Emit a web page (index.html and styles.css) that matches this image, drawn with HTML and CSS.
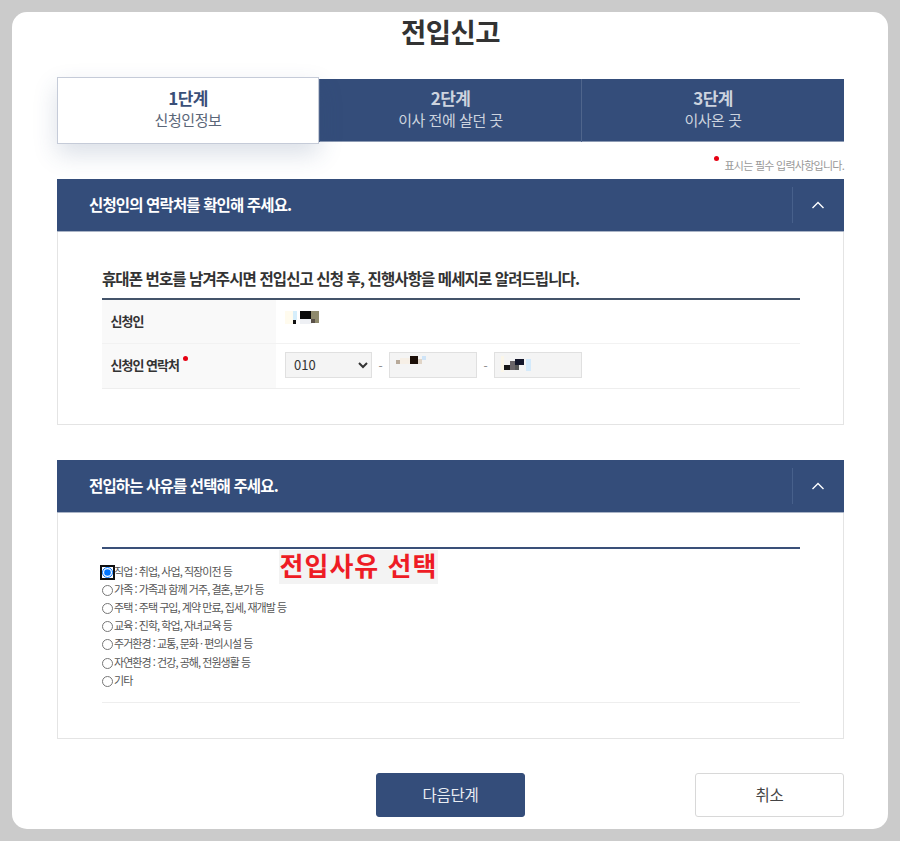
FILE: index.html
```html
<!DOCTYPE html>
<html lang="ko">
<head>
<meta charset="utf-8">
<title>전입신고</title>
<link rel="stylesheet" href="styles.css">
</head>
<body>
<main class="card">
  <h1 class="title">전입신고</h1>
  <ol class="steps">
    <li class="step active"><strong>1단계</strong><span>신청인정보</span></li>
    <li class="step"><strong>2단계</strong><span>이사 전에 살던 곳</span></li>
    <li class="step"><strong>3단계</strong><span>이사온 곳</span></li>
  </ol>
  <p class="required-note"><i class="dot"></i>표시는 필수 입력사항입니다.</p>

  <section class="panel">
    <header class="panel-head">
      <h2>신청인의 연락처를 확인해 주세요.</h2>
      <button class="toggle" type="button" aria-label="접기">
        <svg width="14" height="8" viewBox="0 0 14 8"><path d="M1.5 7 7 1.5 12.500 7" fill="none" stroke="#fff" stroke-width="1.400"/></svg>
      </button>
    </header>
    <div class="panel-body contact-body">
      <h3 class="lead">휴대폰 번호를 남겨주시면 전입신고 신청 후, 진행사항을 메세지로 알려드립니다.</h3>
      <div class="form-table">
        <div class="row name-row">
          <div class="label">신청인</div>
          <div class="value">
            <svg class="blur-name" width="34" height="14" viewBox="0 0 34 14" shape-rendering="crispEdges">
              <rect x="0" y="0" width="8" height="13" fill="#fffbee"/>
              <rect x="8" y="0" width="4" height="9" fill="#d6eefb"/>
              <rect x="8" y="9" width="3" height="4" fill="#111"/>
              <rect x="15" y="0" width="12" height="8" fill="#0a0a0a"/>
              <rect x="15" y="8" width="12" height="5" fill="#eef0f4"/>
              <rect x="26" y="0" width="8" height="12" fill="#8f8a6c"/>
              <rect x="26" y="8" width="4" height="4" fill="#5a5148"/>
            </svg>
          </div>
        </div>
        <div class="row phone-row">
          <div class="label">신청인 연락처<i class="dot label-dot"></i></div>
          <div class="value phone">
            <select class="field select"><option>010</option></select>
            <span class="dash">-</span>
            <div class="field text-field">
              <svg width="34" height="10" viewBox="0 0 34 10" shape-rendering="crispEdges">
                <rect x="0" y="4" width="4" height="4" fill="#b8aa9a"/>
                <rect x="4" y="2" width="10" height="6" fill="#f6efe6"/>
                <rect x="14" y="0" width="8" height="8" fill="#1c0f08"/>
                <rect x="22" y="3" width="4" height="5" fill="#e0d4c6"/>
                <rect x="26" y="0" width="4" height="4" fill="#cfe4f7"/>
              </svg>
            </div>
            <span class="dash">-</span>
            <div class="field text-field">
              <svg width="30" height="16" viewBox="0 0 30 16" shape-rendering="crispEdges">
                <rect x="0" y="0" width="3" height="16" fill="#fbf6e8"/>
                <rect x="3" y="9" width="6" height="5" fill="#181818"/>
                <rect x="9" y="5" width="5" height="9" fill="#6a6468"/>
                <rect x="14" y="3" width="9" height="6" fill="#14162a"/>
                <rect x="14" y="9" width="4" height="5" fill="#555"/>
                <rect x="25" y="3" width="5" height="12" fill="#d4eafb"/>
              </svg>
            </div>
          </div>
        </div>
      </div>
    </div>
  </section>

  <section class="panel second">
    <header class="panel-head">
      <h2>전입하는 사유를 선택해 주세요.</h2>
      <button class="toggle" type="button" aria-label="접기">
        <svg width="14" height="8" viewBox="0 0 14 8"><path d="M1.5 7 7 1.5 12.500 7" fill="none" stroke="#fff" stroke-width="1.400"/></svg>
      </button>
    </header>
    <div class="panel-body reason-body">
      <div class="reasons">
        <span class="callout">전입사유 선택</span>
        <label class="reason"><input type="radio" name="reason" class="focused" checked><span>직업 : 취업, 사업, 직장이전 등</span></label>
        <label class="reason"><input type="radio" name="reason"><span>가족 : 가족과 함께 거주, 결혼, 분가 등</span></label>
        <label class="reason"><input type="radio" name="reason"><span>주택 : 주택 구입, 계약 만료, 집세, 재개발 등</span></label>
        <label class="reason"><input type="radio" name="reason"><span>교육 : 진학, 학업, 자녀교육 등</span></label>
        <label class="reason"><input type="radio" name="reason"><span>주거환경 : 교통, 문화 · 편의시설 등</span></label>
        <label class="reason"><input type="radio" name="reason"><span>자연환경 : 건강, 공해, 전원생활 등</span></label>
        <label class="reason"><input type="radio" name="reason"><span>기타</span></label>
      </div>
    </div>
  </section>

  <div class="actions">
    <button class="btn primary" type="button">다음단계</button>
    <button class="btn secondary" type="button">취소</button>
  </div>
</main>
</body>
</html>
```
FILE: styles.css
```css
* { box-sizing: border-box; }
html, body { margin: 0; height: 100%; }
body {
  background: #cbcbcb;
  padding: 12px;
  overflow: hidden;
  font-family: "Noto Sans CJK KR", "Noto Sans", sans-serif;
  color: #333;
}
.card {
  height: 817px;
  background: #fff;
  border-radius: 15px;
  padding: 0 44px 0 45px;
  overflow: hidden;
}
.title {
  margin: 0;
  height: 67px;
  text-align: center;
  font-size: 27.5px;
  line-height: 38px;
  font-weight: 700;
  letter-spacing: -0.5px;
  color: #333;
}
.steps {
  list-style: none;
  margin: 0;
  padding: 0;
  display: grid;
  grid-template-columns: 262px 262px 263px;
  height: 63px;
  background: #344d7a;
  border-bottom: 1px solid #8c9ab3;
}
.step {
  display: flex;
  flex-direction: column;
  align-items: center;
  color: #cdd4df;
  padding-top: 8px;
  border-left: 1px solid #4f658c;
}
.step strong { font-size: 17px; line-height: 22px; font-weight: 700; letter-spacing: -0.6px; }
.step span { font-size: 15px; line-height: 22px; letter-spacing: -0.45px; }
.step.active {
  margin: -2px 0 -2px;
  height: 67px;
  padding-top: 9px;
  background: #fff;
  border: 1px solid #c5cbd8;
  color: #5a6678;
  box-shadow: 0 10px 24px rgba(52, 77, 122, 0.18);
  position: relative;
}
.step.active strong { color: #3a4f78; }
.required-note {
  margin: 0;
  height: 37px;
  padding-top: 14px;
  text-align: right;
  font-size: 11px;
  line-height: 18px;
  letter-spacing: -0.74px;
  color: #999;
}
.dot {
  display: inline-block;
  width: 5px;
  height: 5px;
  border-radius: 50%;
  background: #e60012;
  vertical-align: 9px;
  margin-right: 5px;
}
.panel { border: 1px solid #e4e4e4; border-top: 0; }
.panel.second { margin-top: 35px; }
.panel-head {
  margin: 0 -1px;
  height: 53px;
  background: #344d7a;
  border-bottom: 1px solid #aab4c6;
  display: flex;
  align-items: center;
  justify-content: space-between;
  padding-left: 32px;
}
.panel-head h2 {
  margin: 0;
  padding-bottom: 3px;
  font-size: 15.5px;
  font-weight: 700;
  letter-spacing: -0.86px;
  color: #fff;
}
.toggle {
  width: 52px;
  height: 36px;
  background: none;
  border: 0;
  border-left: 1px solid #47608b;
  padding: 0 2px 0 0;
  display: flex;
  align-items: center;
  justify-content: center;
}
.panel-body { padding: 0 43px 0 44px; }
.contact-body { height: 192px; padding-top: 33px; }
.lead {
  margin: 0;
  height: 35px;
  font-size: 15.5px;
  line-height: 26px;
  font-weight: 700;
  letter-spacing: -0.89px;
  color: #333;
  border-bottom: 2px solid #44546a;
  white-space: nowrap;
}
.row { display: flex; border-bottom: 1px solid #eee; }
.name-row { height: 44px; border-bottom-color: #f2f2f2; }
.phone-row { height: 45px; }
.label {
  width: 174px;
  background: #f9f9f9;
  padding: 0 0 3px 8.500px;
  font-size: 13px;
  font-weight: 700;
  letter-spacing: -1px;
  color: #333;
  display: flex;
  align-items: center;
}
.label-dot { margin: 0 0 13px 4px; vertical-align: baseline; }
.value { flex: 1; padding-left: 9px; }
.blur-name { display: block; margin-top: 11px; }
.phone { display: flex; align-items: center; padding-bottom: 2px; }
.field {
  height: 26px;
  background: #f4f4f4;
  border: 1px solid #e0e0e0;
}
.select {
  width: 87px;
  padding: 0 0 1px 4px;
  font-family: "Noto Sans CJK KR", sans-serif;
  font-size: 13px;
  color: #333;
  border-radius: 0;
}
.text-field {
  width: 88px;
  padding-left: 6px;
  display: flex;
  align-items: flex-start;
}
.text-field svg { margin-top: 3px; }
.dash { width: 17px; text-align: center; font-size: 12px; color: #888; }
.reason-body { height: 225px; padding-top: 34px; }
.reasons {
  position: relative;
  height: 156px;
  border-top: 2px solid #3a5079;
  border-bottom: 1px solid #eee;
  padding-top: 13.500px;
}
.callout {
  position: absolute;
  left: 177px;
  top: 1px;
  width: 159px;
  height: 34px;
  background: #f3f3f3;
  color: #ee1c25;
  font-size: 26px;
  line-height: 30px;
  font-weight: 700;
  letter-spacing: 1px;
  white-space: nowrap;
  text-align: center;
}
.reason {
  display: flex;
  align-items: center;
  height: 18.2px;
  font-size: 11px;
  letter-spacing: -0.95px;
  color: #555;
  white-space: nowrap;
}
.reason span { position: relative; top: -1px; }
.reason input {
  width: 11px;
  height: 11px;
  margin: 1px 1px 0 0;
  flex: none;
}
.reason input.focused { outline: 2px solid #111; outline-offset: 0; border-radius: 3px; }
.actions { margin-top: 34px; display: flex; padding-left: 319px; }
.btn {
  height: 44px;
  width: 149px;
  border-radius: 3px;
  font-family: "Noto Sans CJK KR", sans-serif;
  font-size: 15.5px;
  letter-spacing: -0.3px;
  padding: 0 0 2px;
}
.primary { background: #344d7a; color: #e8ecf2; border: 1px solid #344d7a; }
.secondary { background: #fff; color: #444; border: 1px solid #d8d8d8; margin-left: auto; }
```
